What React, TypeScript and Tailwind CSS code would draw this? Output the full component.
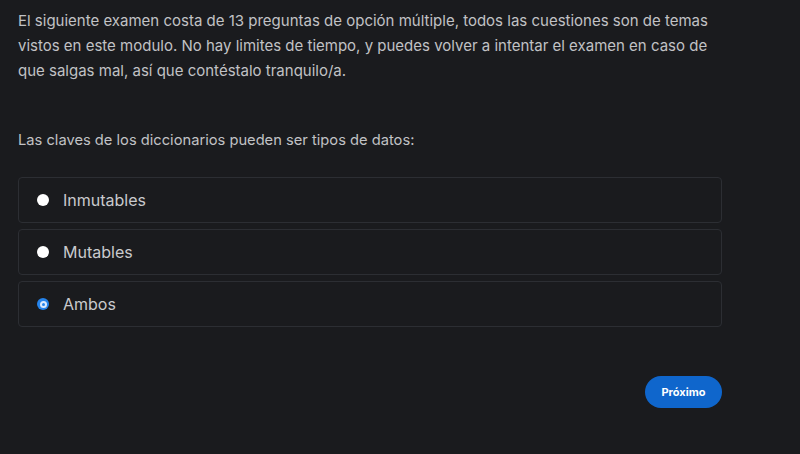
import React, { useState } from 'react';

const options = ['Inmutables', 'Mutables', 'Ambos'];

const Radio: React.FC<{ checked: boolean }> = ({ checked }) =>
    checked ? (
        <span className="flex items-center justify-center size-3 rounded-full bg-[#2584ec]">
            <span className="flex items-center justify-center size-[7px] rounded-full bg-[#dce9fb]">
                <span className="size-[3px] rounded-full bg-[#2584ec]"></span>
            </span>
        </span>
    ) : (
        <span className="size-3 rounded-full bg-white"></span>
    );

export default function App() {
    const [selected, setSelected] = useState('Ambos');

    return (
        <div className="min-h-[454px] w-full bg-[#1a1b1e] text-[#c1c2c5] font-['Inter',sans-serif] pl-[18px] pr-[78px] pt-[8px]">
            <p className="text-[15px] leading-[25px] max-w-[700px]">
                El siguiente examen costa de 13 preguntas de opción múltiple, todos las cuestiones son de temas
                vistos en este modulo. No hay limites de tiempo, y puedes volver a intentar el examen en caso de
                que salgas mal, así que contéstalo tranquilo/a.
            </p>

            <p className="text-[14.7px] leading-[25px] mt-[45px]">Las claves de los diccionarios pueden ser tipos de datos:</p>

            <div className="flex flex-col gap-[6px] mt-[24px] w-[704px]">
                {options.map(opt => (
                    <button
                        key={opt}
                        onClick={() => setSelected(opt)}
                        className="flex items-center h-[46px] border border-[#2c2e33] rounded-[4px] bg-[#1a1b1e] pl-[18px] text-left"
                    >
                        <Radio checked={selected === opt} />
                        <span className="ml-[14px] text-[16px] text-[#c9cacd]">{opt}</span>
                    </button>
                ))}
            </div>

            <div className="flex justify-end w-[704px] mt-[49px]">
                <button className="h-[32px] w-[77px] rounded-full bg-[#0f66cc] text-white text-[11px] font-bold">
                    Próximo
                </button>
            </div>
        </div>
    );
}
